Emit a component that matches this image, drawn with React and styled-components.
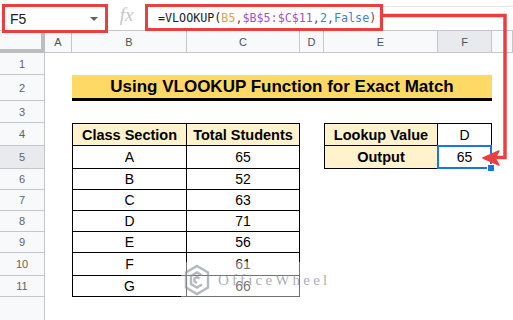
import React from 'react';
import styled, { createGlobalStyle } from 'styled-components';

const GlobalStyle = createGlobalStyle`
  html, body {
    margin: 0;
    padding: 0;
    background: #fff;
  }
  body {
    font-family: "Liberation Sans", Arial, sans-serif;
  }
`;

const Page = styled.div`
  position: relative;
  width: 513px;
  height: 320px;
  overflow: hidden;
  background: #fff;
`;

const TopBar = styled.div`
  display: flex;
  align-items: flex-start;
  height: 30px;
  position: relative;
  z-index: 3;
`;

const NameBox = styled.div`
  box-sizing: border-box;
  margin: 4px 0 0 2px;
  width: 106px;
  height: 29px;
  border: 3px solid #e9403f;
  background: #fff;
  display: flex;
  align-items: center;
  justify-content: space-between;
  padding: 0 7px 0 5px;
  font-size: 14px;
  color: #202124;
`;

const Caret = styled.span`
  width: 0;
  height: 0;
  border-left: 4px solid transparent;
  border-right: 4px solid transparent;
  border-top: 4px solid #5f6368;
`;

const FxLabel = styled.div`
  width: 37px;
  height: 30px;
  display: flex;
  align-items: center;
  justify-content: center;
  font-family: "Liberation Serif", "Times New Roman", serif;
  font-style: italic;
  font-size: 19px;
  color: #c4c7c5;
`;

const FormulaBar = styled.div`
  flex: 1;
  margin-top: 6px;
  border-top: 1px solid #e3e3e3;
  height: 23px;
`;

const FormulaBox = styled.div`
  box-sizing: border-box;
  margin-top: -3px;
  width: 238px;
  height: 27px;
  border: 3px solid #e9403f;
  background: #fff;
  display: flex;
  align-items: center;
  padding-left: 10px;
  font-family: "DejaVu Sans Mono", "Liberation Mono", monospace;
  font-size: 11.7px;
  color: #202124;
  white-space: pre;
`;

const Tok = styled.span`
  color: ${p => p.$c || '#202124'};
`;

const Sheet = styled.div`
  display: grid;
  grid-template-columns: 45px 27px 115px 113px 24px 114px 54px 1fr;
  grid-template-rows: 23px 22px 26px 22px 23px 23px 21px 21px 21px 21px 23px 21px 1fr;
  height: 290px;
  background: #fff;
`;

const Corner = styled.div`
  grid-column: 1;
  grid-row: 1;
  box-sizing: border-box;
  background: #f8f9fa;
  border-top: 1px solid #c4c7c5;
  border-right: 4px solid #bdbdbd;
  border-bottom: 4px solid #bdbdbd;
`;

const ColHead = styled.div`
  grid-column: ${p => p.$col};
  grid-row: 1;
  box-sizing: border-box;
  background: ${p => (p.$active ? '#e8eaed' : '#f8f9fa')};
  border-top: 1px solid #c4c7c5;
  border-right: 1px solid #c4c7c5;
  border-bottom: 1px solid #c4c7c5;
  display: flex;
  align-items: center;
  justify-content: center;
  font-size: 11px;
  color: #4d5156;
`;

const RowHead = styled.div`
  grid-column: 1;
  grid-row: ${p => p.$row};
  box-sizing: border-box;
  background: ${p => (p.$active ? '#e8eaed' : '#f8f9fa')};
  border-right: 1px solid #c4c7c5;
  border-bottom: ${p => (p.$filler ? 'none' : '1px solid #c4c7c5')};
  display: flex;
  align-items: center;
  justify-content: center;
  font-size: 11px;
  color: #5f6368;
`;

const Title = styled.div`
  grid-column: 3 / 8;
  grid-row: 3;
  box-sizing: border-box;
  background: #ffd966;
  border-bottom: 3px solid #000;
  display: flex;
  align-items: center;
  justify-content: center;
  font-weight: 700;
  font-size: 17px;
  color: #000;
`;

const Cell = styled.div`
  grid-column: ${p => p.$col};
  grid-row: ${p => p.$row};
  position: relative;
  box-sizing: border-box;
  border-right: 1px solid #000;
  border-bottom: 1px solid #000;
  border-left: ${p => (p.$left ? '1px solid #000' : 'none')};
  border-top: ${p => (p.$top ? '1px solid #000' : 'none')};
  background: ${p => (p.$head ? '#fff2cc' : '#fff')};
  display: flex;
  align-items: center;
  justify-content: center;
  font-weight: ${p => (p.$head ? 700 : 400)};
  font-size: ${p => (p.$head ? '14.5px' : '14px')};
  color: #000;
`;

const Selection = styled.div`
  position: absolute;
  left: -1px;
  top: -1px;
  right: -1px;
  bottom: -1px;
  border: 2px solid #1a73e8;
`;

const Handle = styled.div`
  position: absolute;
  right: -5px;
  bottom: -5px;
  width: 6px;
  height: 6px;
  background: #1a73e8;
  border: 1px solid #fff;
`;

const Arrow = styled.svg`
  position: absolute;
  left: 0;
  top: 0;
  z-index: 4;
  pointer-events: none;
`;

const Watermark = styled.div`
  position: absolute;
  left: 181px;
  top: 262px;
  width: 150px;
  height: 36px;
  display: flex;
  align-items: center;
  gap: 8px;
  padding-left: 3px;
  box-sizing: border-box;
  background: rgba(255, 255, 255, 0.45);
  z-index: 2;
`;

const MarkText = styled.span`
  font-family: "Liberation Serif", "Times New Roman", serif;
  font-size: 15px;
  letter-spacing: 3.2px;
  color: rgba(130, 138, 155, 0.7);
`;

const students = [
  ['A', 65],
  ['B', 52],
  ['C', 63],
  ['D', 71],
  ['E', 56],
  ['F', 61],
  ['G', 66],
];

const cols = ['A', 'B', 'C', 'D', 'E', 'F', ''];

function Logo() {
  return (
    <svg width="26" height="32" viewBox="0 0 26 32" fill="none" stroke="rgba(140,146,160,0.65)" strokeWidth="2.4">
      <path d="M13 2 L24 8.5 V23.5 L13 30 L2 23.5 V8.5 Z" />
      <path d="M18 11.5 L13 8.5 L7 12 V20 L13 23.5 L18 20.5" />
      <path d="M15.5 14.5 L13 13 L10.5 14.5 V17.5 L13 19" />
    </svg>
  );
}

export default function App() {
  return (
    <Page>
      <GlobalStyle />
      <TopBar>
        <NameBox>
          <span>F5</span>
          <Caret />
        </NameBox>
        <FxLabel>fx</FxLabel>
        <FormulaBar>
          <FormulaBox>
            <Tok>=VLOOKUP(</Tok>
            <Tok $c="#f29b36">B5</Tok>
            <Tok $c="#555">,</Tok>
            <Tok $c="#a353c4">$B$5:$C$11</Tok>
            <Tok $c="#555">,</Tok>
            <Tok $c="#3f7fd6">2</Tok>
            <Tok $c="#555">,</Tok>
            <Tok $c="#3f7fd6">False</Tok>
            <Tok $c="#555">)</Tok>
          </FormulaBox>
        </FormulaBar>
      </TopBar>

      <Sheet>
        <Corner />
        {cols.map((c, i) => (
          <ColHead key={i} $col={i + 2} $active={c === 'F'}>
            {c}
          </ColHead>
        ))}
        {Array.from({ length: 11 }, (_, i) => (
          <RowHead key={i} $row={i + 2} $active={i + 1 === 5}>
            {i + 1}
          </RowHead>
        ))}
        <RowHead $row={13} $filler />

        <Title>Using VLOOKUP Function for Exact Match</Title>

        <Cell $col={3} $row={5} $left $top $head>Class Section</Cell>
        <Cell $col={4} $row={5} $top $head>Total Students</Cell>
        {students.map(([sec, total], i) => (
          <React.Fragment key={sec}>
            <Cell $col={3} $row={i + 6} $left>{sec}</Cell>
            <Cell $col={4} $row={i + 6}>{total}</Cell>
          </React.Fragment>
        ))}

        <Cell $col={6} $row={5} $left $top $head>Lookup Value</Cell>
        <Cell $col={7} $row={5} $top>D</Cell>
        <Cell $col={6} $row={6} $left $head>Output</Cell>
        <Cell $col={7} $row={6}>
          65
          <Selection>
            <Handle />
          </Selection>
        </Cell>
      </Sheet>

      <Watermark>
        <Logo />
        <MarkText>OfficeWheel</MarkText>
      </Watermark>

      <Arrow width="513" height="320" viewBox="0 0 513 320">
        <path d="M383 15.5 H505 V157.5 H494" stroke="#e9403f" strokeWidth="3.5" fill="none" strokeLinejoin="miter" />
        <path d="M483 158 L499 151 L495 158 L499 165 Z" fill="#e9403f" stroke="#e9403f" strokeWidth="1.5" strokeLinejoin="round" />
      </Arrow>
    </Page>
  );
}
